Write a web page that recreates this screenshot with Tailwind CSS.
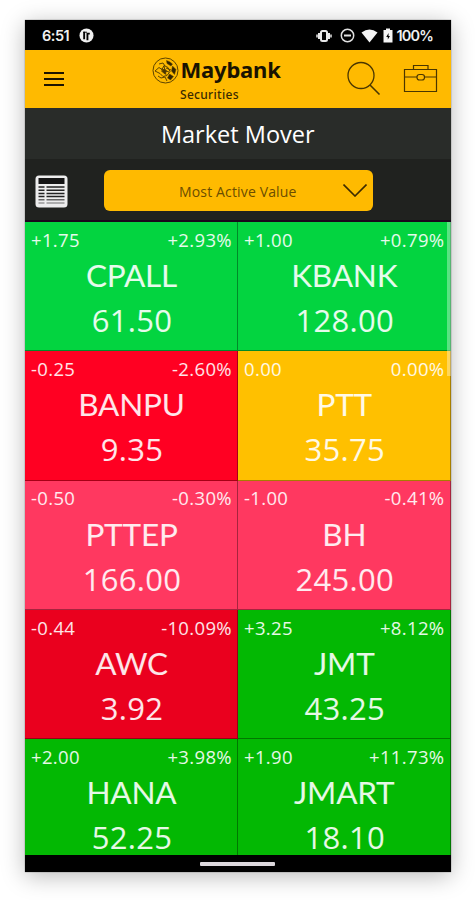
<!DOCTYPE html>
<html lang="en">
<head>
    <meta charset="utf-8">
    <meta name="viewport" content="width=device-width, initial-scale=1">
    <title>Market Mover</title>
    <script src="https://cdn.jsdelivr.net/npm/@tailwindcss/browser@4"></script>
</head>
<body class="h-[900px] overflow-hidden bg-white font-['Open_Sans',sans-serif]">
<div class="mt-[20px] ml-[25px] flex h-[852px] w-[425.5px] flex-col overflow-hidden bg-black shadow-[0_4px_22px_rgba(0,0,0,0.28),0_0_1px_rgba(0,0,0,0.6)]">

    <!-- status bar -->
    <div class="flex h-[30px] shrink-0 items-center pt-[1px] pr-[17px] pl-[17px] font-['Inter',sans-serif] text-[14.5px] font-semibold text-[#f0f0f0]">
        <span class="w-[28px] tracking-[-0.5px]">6:51</span>
        <svg class="ml-[9px] size-[15px]" viewBox="0 0 16 16">
            <circle cx="8" cy="8" r="7.5" fill="#f0f0f0"/>
            <path d="M5.500 4v8M9 13V6h2.500" fill="none" stroke="#000" stroke-width="2"/>
            <path d="M4.500 4.500h4" stroke="#000" stroke-width="1"/>
        </svg>
        <svg class="ml-auto h-[14px] w-[16px]" viewBox="0 0 16 14" fill="none" stroke="#e8e8e8">
            <rect x="5" y="2" width="6" height="10" rx="1.500" stroke-width="2"/>
            <path d="M3 4v6M13 4v6" stroke-width="2"/>
            <path d="M1 5.500v3M15 5.500v3" stroke-width="1.500"/>
        </svg>
        <svg class="ml-[8px] size-[15px]" viewBox="0 0 15 15" fill="none" stroke="#e0e0e0">
            <circle cx="7.500" cy="7.500" r="6.200" stroke-width="1.500"/>
            <path d="M4 7.500h7" stroke-width="2"/>
        </svg>
        <svg class="ml-[6px] h-[14px] w-[17px]" viewBox="0 0 17 14">
            <path d="M.5 3.500Q8.500-2.500 16.500 3.500L8.500 13.500z" fill="#f4f4f4"/>
        </svg>
        <svg class="ml-[5px] h-[15px] w-[10px]" viewBox="0 0 10 15">
            <path d="M3 .5h4V2h2.500v12.500H.5V2H3z" fill="#f4f4f4"/>
            <path d="M5.600 5 3.200 9h1.600v2.500L7 8H5.500z" fill="#000"/>
        </svg>
        <span class="ml-[4px] w-[37px] tracking-[-0.8px] whitespace-nowrap">100%</span>
    </div>

    <!-- app header -->
    <header class="flex h-[58px] shrink-0 bg-[#ffba00]">
        <svg class="mt-[21px] ml-[19px] h-[16px] w-[20px]" viewBox="0 0 20 16" stroke="#1c1400" stroke-width="2">
            <path d="M0 2h20M0 8h20M0 14h20"/>
        </svg>
        <div class="ml-[87.5px] w-[130px]">
            <div class="flex h-[34px] items-center">
                <svg class="mt-[6px] size-[27px] shrink-0" viewBox="0 0 27 27" fill="none" stroke="#5c4300">
                    <circle cx="13.500" cy="13.500" r="12.500" stroke-width="1"/>
                    <path d="M14.500 3.500q3 .5 6 3.500l-1.500 2-4-2.500zM20.500 9l3.500 3.500-1.500 5-3-3.500zM17.500 17l4 2.500-3 3.500-3-2z" fill="#332500" stroke-width=".5"/>
                    <path d="M3 14l4-3.500 3 2 2-4 4 2 2 4-3 4-4 1-3-3zM7 7l4-1 2 3M6 19l3 2 4-1 2 4M12 9l2 9M9 12l8 3M14 11l5 2" stroke-width="1"/>
                    <path d="M9.500 14l3-2 2 2-1.500 3z" fill="#4a3600"/>
                </svg>
                <span class="mt-[4px] ml-[2px] font-['Noto_Sans',sans-serif] text-[22px] leading-none font-bold tracking-[-0.2px] text-[#1a1300]">Maybank</span>
            </div>
            <p class="mt-[2px] ml-[28.5px] font-['Noto_Sans',sans-serif] text-[12px] leading-[17px] font-medium tracking-[0.3px] text-[#3a2a00]">Securities</p>
        </div>
        <svg class="mt-[11px] ml-[65px] size-[35px]" viewBox="0 0 35 35" fill="none" stroke="#4a3600" stroke-width="1.300">
            <circle cx="14" cy="14.500" r="13"/>
            <path d="M23 24l9.500 9.500" stroke-width="1.600"/>
        </svg>
        <svg class="mt-[14px] ml-[21.5px] h-[29px] w-[35px]" viewBox="0 0 35 29" fill="none" stroke="#4a3600" stroke-width="1.200">
            <path d="M1.500 5.500h32v22h-32zM10.500 5.500v-4H25v4M1.500 13h12.500M21.500 13h12"/>
            <rect x="14" y="10.500" width="7.500" height="5.500" rx="2.500"/>
        </svg>
    </header>

    <h1 class="h-[51px] shrink-0 bg-[#292c29] text-center text-[23.5px] leading-[52px] text-white">Market Mover</h1>

    <!-- list toggle and sort order -->
    <div class="flex h-[63px] shrink-0 border-b-2 border-[#1a081c] bg-[#20221f]">
        <svg class="mt-[16px] ml-[10px] size-[33px]" viewBox="0 0 33 33">
            <rect x=".5" y=".5" width="32" height="32" rx="3.500" fill="#ededed"/>
            <path d="M3.500 3h26v6h-26z" fill="#151515"/>
            <g stroke="#222" stroke-width="1.500">
                <path d="M3.500 12h6M11.500 12h18M3.500 15.200h6M11.500 15.200h18M3.500 18.400h6M11.500 18.400h18M3.500 21.600h6M11.500 21.600h18"/>
                <path d="M3.500 24.800h6M11.500 24.800h18" stroke="#666"/>
                <path d="M3.500 28h6M11.500 28h18" stroke="#999"/>
            </g>
        </svg>
        <button class="mt-[11px] ml-[35.5px] flex h-[41px] w-[269px] items-center rounded-[6px] bg-[#ffba00]">
            <span class="ml-[75.5px] w-[119px] pt-[1px] text-left text-[14px] tracking-[0.15px] whitespace-nowrap text-[#6b4d00]">Most Active Value</span>
            <svg class="ml-[45px] h-[13px] w-[24px]" viewBox="0 0 24 13" fill="none" stroke="#3d2b00" stroke-width="1.600">
                <path d="M.5.500 12 12 23.500.500"/>
            </svg>
        </button>
    </div>

    <div class="relative h-[633px] shrink-0 overflow-hidden">
        <div id="tiles" class="grid auto-rows-[129.3px] grid-cols-[213px_212.5px]"></div>
        <!-- scroll indicator -->
        <div class="absolute top-0 right-0 h-[154px] w-[4px] bg-white/35"></div>
    </div>

    <!-- gesture bar -->
    <div class="flex h-[17px] shrink-0 justify-center bg-black pt-[7px]">
        <div class="h-[4px] w-[75px] rounded-[1px] bg-[#dcd8dc]"></div>
    </div>
</div>

<script>
const stocks = [
    { name: "CPALL", price: "61.50", change: "+1.75", percent: "+2.93%", color: "bg-[#03d440]" },
    { name: "KBANK", price: "128.00", change: "+1.00", percent: "+0.79%", color: "bg-[#03d440]" },
    { name: "BANPU", price: "9.35", change: "-0.25", percent: "-2.60%", color: "bg-[#ff0022]" },
    { name: "PTT", price: "35.75", change: "0.00", percent: "0.00%", color: "bg-[#ffc000]" },
    { name: "PTTEP", price: "166.00", change: "-0.50", percent: "-0.30%", color: "bg-[#ff3860]" },
    { name: "BH", price: "245.00", change: "-1.00", percent: "-0.41%", color: "bg-[#ff3860]" },
    { name: "AWC", price: "3.92", change: "-0.44", percent: "-10.09%", color: "bg-[#ea001e]" },
    { name: "JMT", price: "43.25", change: "+3.25", percent: "+8.12%", color: "bg-[#03b803]" },
    { name: "HANA", price: "52.25", change: "+2.00", percent: "+3.98%", color: "bg-[#03b803]" },
    { name: "JMART", price: "18.10", change: "+1.90", percent: "+11.73%", color: "bg-[#03b803]" },
]

document.getElementById("tiles").innerHTML = stocks.map((s) => `
    <div class="${s.color} border-r border-b border-black/35 text-center text-white/90">
        <div class="flex h-[36px] items-center justify-between pr-[5px] pl-[6px] text-[18.5px] leading-none tracking-[0.35px]">
            <span>${s.change}</span>
            <span>${s.percent}</span>
        </div>
        <p class="h-[34px] pl-[1px] font-['Lato',sans-serif] text-[31.5px] leading-[34px] tracking-[-0.2px]">${s.name}</p>
        <p class="mt-[12px] pl-[2px] text-[31px] leading-[32px] tracking-[0.3px]">${s.price}</p>
    </div>`).join("")
</script>
</body>
</html>
